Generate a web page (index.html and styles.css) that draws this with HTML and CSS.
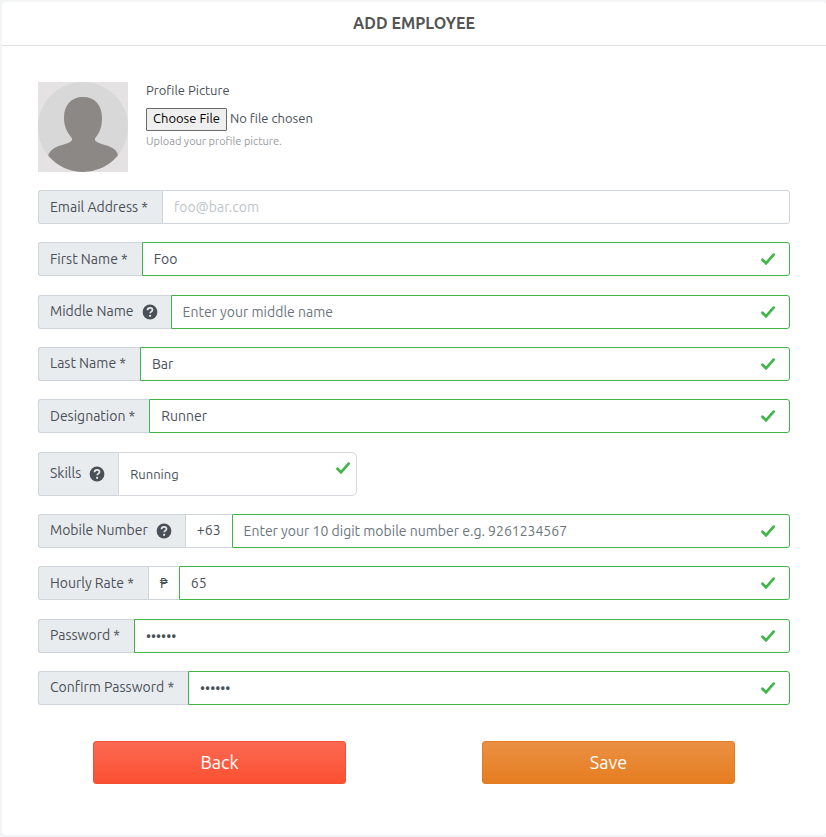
FILE: index.html
```html
<!DOCTYPE html>
<html lang="en">
<head>
<meta charset="utf-8">
<meta name="viewport" content="width=device-width, initial-scale=1">
<title>Add Employee</title>
<link rel="stylesheet" href="styles.css">
</head>
<body>
<svg class="sprite" aria-hidden="true">
  <symbol id="check" viewBox="0 0 14 12"><path d="M1.5 6.8 5 10.3 12.6 1.6" fill="none" stroke="#3fb54a" stroke-width="2.7" stroke-linecap="round" stroke-linejoin="miter"/></symbol>
  <symbol id="help" viewBox="0 0 16 16"><circle cx="8" cy="8" r="7.4" fill="#495057"/><path d="M5.5 6.2C5.6 4.5 6.6 3.8 8 3.8c1.5 0 2.5.9 2.5 2.1 0 1.7-2.3 1.8-2.3 3.4" fill="none" stroke="#e9ecef" stroke-width="1.7"/><circle cx="8.1" cy="11.8" r="1.1" fill="#e9ecef"/></symbol>
</svg>
<main class="card">
  <header class="card-header"><h1>ADD EMPLOYEE</h1></header>
  <form class="card-body">
    <div class="profile">
      <svg class="avatar" viewBox="0 0 90 90" aria-hidden="true">
        <clipPath id="disc"><circle cx="45" cy="45" r="45"/></clipPath>
        <rect width="90" height="90" fill="#e4e2e3"/>
        <circle cx="45" cy="45" r="45" fill="#d8d8d8"/>
        <path clip-path="url(#disc)" fill="#8c8886" d="M45 15c12 0 19 8 19 21 0 8-2 14-6 19-2 2-1 4 1 5 5 3 12 3 17 7 3 2 4 5 4 8v15H10V75c0-3 2-6 5-8 5-4 12-4 17-7 2-1 3-3 1-5-4-5-7-11-7-19 0-13 7-21 19-21z"/>
      </svg>
      <div class="upload">
        <label for="picture">Profile Picture</label>
        <input type="file" id="picture">
        <small>Upload your profile picture.</small>
      </div>
    </div>

    <div class="fields">
      <div class="group">
        <label class="tag" for="email">Email Address *</label>
        <div class="control"><input type="email" id="email" placeholder="foo@bar.com"></div>
      </div>
      <div class="group">
        <label class="tag" for="first">First Name *</label>
        <div class="control valid"><input type="text" id="first" value="Foo"><svg class="check"><use href="#check"/></svg></div>
      </div>
      <div class="group">
        <label class="tag" for="middle">Middle Name <svg class="help"><use href="#help"/></svg></label>
        <div class="control valid"><input type="text" id="middle" placeholder="Enter your middle name"><svg class="check"><use href="#check"/></svg></div>
      </div>
      <div class="group">
        <label class="tag" for="last">Last Name *</label>
        <div class="control valid"><input type="text" id="last" value="Bar"><svg class="check"><use href="#check"/></svg></div>
      </div>
      <div class="group">
        <label class="tag" for="designation">Designation *</label>
        <div class="control valid"><input type="text" id="designation" value="Runner"><svg class="check"><use href="#check"/></svg></div>
      </div>
      <div class="group skills">
        <label class="tag" for="skills">Skills <svg class="help"><use href="#help"/></svg></label>
        <div class="control"><select id="skills"><option>Running</option></select><svg class="check"><use href="#check"/></svg></div>
      </div>
      <div class="group">
        <label class="tag" for="mobile">Mobile Number <svg class="help"><use href="#help"/></svg></label>
        <span class="tag plain">+63</span>
        <div class="control valid"><input type="tel" id="mobile" placeholder="Enter your 10 digit mobile number e.g. 9261234567"><svg class="check"><use href="#check"/></svg></div>
      </div>
      <div class="group">
        <label class="tag" for="rate">Hourly Rate *</label>
        <span class="tag plain">₱</span>
        <div class="control valid"><input type="text" inputmode="decimal" id="rate" value="65"><svg class="check"><use href="#check"/></svg></div>
      </div>
      <div class="group">
        <label class="tag" for="password">Password *</label>
        <div class="control valid"><input type="password" id="password" value="foobar"><svg class="check"><use href="#check"/></svg></div>
      </div>
      <div class="group">
        <label class="tag" for="confirm">Confirm Password *</label>
        <div class="control valid"><input type="password" id="confirm" value="foobar"><svg class="check"><use href="#check"/></svg></div>
      </div>
    </div>

    <div class="actions">
      <button type="button" class="btn back">Back</button>
      <button type="submit" class="btn save">Save</button>
    </div>
  </form>
</main>
</body>
</html>
```
FILE: styles.css
```css
* { box-sizing: border-box; }

body {
  margin: 0;
  min-height: 100vh;
  padding: 2px 0 2px 2px;
  display: flex;
  background: #f3f4f5;
  color: #495057;
  font-family: Ubuntu, "Noto Sans", sans-serif;
  font-size: 14px;
  line-height: 20px;
}

.sprite { position: absolute; width: 0; height: 0; }

.card {
  flex: 1;
  display: flex;
  flex-direction: column;
  background: #fff;
  border-radius: 4px;
}

.card-header {
  padding: 11px 0 12px;
  border-bottom: 1px solid #dee0e2;
  text-align: center;
}

h1 {
  margin: 0;
  font-size: 16px;
  line-height: 20px;
  font-weight: 600;
  color: #555;
}

.card-body {
  flex: 1;
  display: flex;
  flex-direction: column;
  padding: 36px 36px 51px;
}

.profile { display: flex; gap: 18px; margin-bottom: 18px; }
.avatar { width: 90px; height: 90px; }

.upload {
  display: flex;
  flex-direction: column;
  align-items: flex-start;
  font-size: 13px;
  line-height: 17px;
}

.upload input {
  margin-top: 9px;
  font: inherit;
}

.upload input::file-selector-button {
  height: 23px;
  margin: 0 3px 0 0;
  padding: 0 6px 2px;
  border: 1px solid #6b6b6b;
  border-radius: 1px;
  background: #efefef;
  color: #000;
  font: inherit;
}

.upload small { font-size: 11px; line-height: 20px; color: #979ba0; }

.fields {
  flex: 1;
  display: flex;
  flex-direction: column;
  justify-content: space-between;
  gap: 18px;
}

.group { display: flex; height: 34px; }

.tag {
  display: flex;
  align-items: center;
  gap: 8px;
  padding: 0 14px 1px 11px;
  border: 1px solid #ced4da;
  border-right: 0;
  border-radius: 3px 0 0 3px;
  background: #e9ecef;
  white-space: nowrap;
}

.tag.plain { background: #fff; border-radius: 0; padding: 0 11px 1px; }

.help { width: 16px; height: 16px; margin: 1px -1px 0 0; }

.control {
  flex: 1;
  min-width: 0;
  display: flex;
  align-items: center;
  border: 1px solid #ced4da;
  border-radius: 0 3px 3px 0;
}

.control.valid { border-color: #3fb54a; }

.control input,
.control select {
  flex: 1;
  min-width: 0;
  height: 100%;
  padding: 0 11px;
  border: 0;
  outline: 0;
  background: none;
  color: inherit;
  font: inherit;
}

.control input::placeholder { color: #bfc4c8; opacity: 1; }
.control.valid input::placeholder { color: #6c757d; }

.check { flex: none; width: 14px; height: 12px; margin-right: 14px; }

.group.skills { width: 319px; max-width: 100%; height: 44px; }
.skills .control { border-radius: 0 5px 5px 0; border-color: #d5d8dc; }
.skills .control select { appearance: none; font-size: 13px; }
.skills .check { align-self: flex-start; margin: 9px 6px 0 0; }

.actions {
  display: grid;
  grid-template-columns: 1fr 1fr;
  justify-items: center;
  margin: 36px -13px 0;
}

.btn {
  width: 65%;
  height: 43px;
  padding: 0 0 2px;
  border: 1px solid;
  border-radius: 3px;
  color: #fff;
  font: inherit;
  font-size: 18px;
}

.back { border-color: #f05133; background: linear-gradient(#fc6a52, #fb4f31); }
.save { border-color: #e07c22; background: linear-gradient(#ea9043, #e67d20); }
```
